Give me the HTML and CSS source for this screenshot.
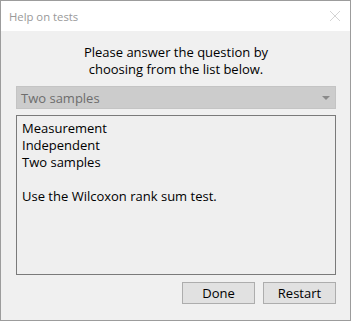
FILE: index.html
```html
<!DOCTYPE html>
<html lang="en">
  <head>
    <meta charset="UTF-8" />
    <meta name="viewport" content="width=device-width, initial-scale=1.0" />
    <title>Help on tests</title>
    <link rel="stylesheet" href="styles.css">
  </head>
  <body>
    <div class="dialog">
      <div class="title-bar">
        <span class="title">Help on tests</span>
        <svg class="close" width="12" height="12" viewBox="0 0 12 12">
          <path d="M1 1 L11 11 M11 1 L1 11" stroke="#d4d4d4" stroke-width="1" />
        </svg>
      </div>

      <div class="dialog-body">
        <p class="question">
          Please answer the question by<br />
          choosing from the list below.
        </p>

        <div class="choice">
          <span>Two samples</span>
          <span class="arrow"></span>
        </div>

        <div class="answer">
          <p>Measurement</p>
          <p>Independent</p>
          <p>Two samples</p>
          <p>&nbsp;</p>
          <p>Use the Wilcoxon rank sum test.</p>
        </div>

        <div class="buttons">
          <button>Done</button>
          <button>Restart</button>
        </div>
      </div>
    </div>
  </body>
</html>
```

FILE: styles.css
```css
* {
  font-family: "Open Sans", "Noto Sans", sans-serif;
  margin: 0;
  padding: 0;
  box-sizing: border-box;
}

body {
  background: #ffffff;
  width: 352px;
  height: 322px;
  overflow: hidden;
}

.dialog {
  width: 351px;
  height: 321px;
  border: 1px solid #9c9c9c;
  background: #f0f0f0;
  display: flex;
  flex-direction: column;
}

.title-bar {
  height: 30px;
  background: #ffffff;
  display: flex;
  align-items: center;
  justify-content: space-between;
  padding: 0 9px 0 8px;
}

.title {
  color: #999999;
  font-size: 11.3px;
}

.dialog-body {
  padding: 13px 14px 0 15px;
  display: flex;
  flex-direction: column;
}

.question {
  text-align: center;
  font-size: 13px;
  line-height: 17px;
  color: #000;
}

.choice {
  margin-top: 8px;
  height: 23px;
  background: #cccccc;
  border: 1px solid #c4c4c4;
  display: flex;
  align-items: center;
  justify-content: space-between;
  padding: 0 5px 0 4px;
  color: #6d6d6d;
  font-size: 13px;
}

.arrow {
  width: 0;
  height: 0;
  border-left: 4px solid transparent;
  border-right: 4px solid transparent;
  border-top: 4px solid #8a8a8a;
}

.answer {
  margin-top: 6px;
  height: 160px;
  border: 1px solid #7a7a7a;
  background: #efefef;
  padding: 4px 5px;
}

.answer p {
  font-size: 13px;
  line-height: 17px;
  color: #000;
}

.buttons {
  margin-top: 7px;
  display: flex;
  justify-content: flex-end;
  gap: 8px;
}

.buttons button {
  width: 73px;
  height: 22px;
  background: #e1e1e1;
  border: 1px solid #adadad;
  font-size: 13px;
  color: #000;
}
```
